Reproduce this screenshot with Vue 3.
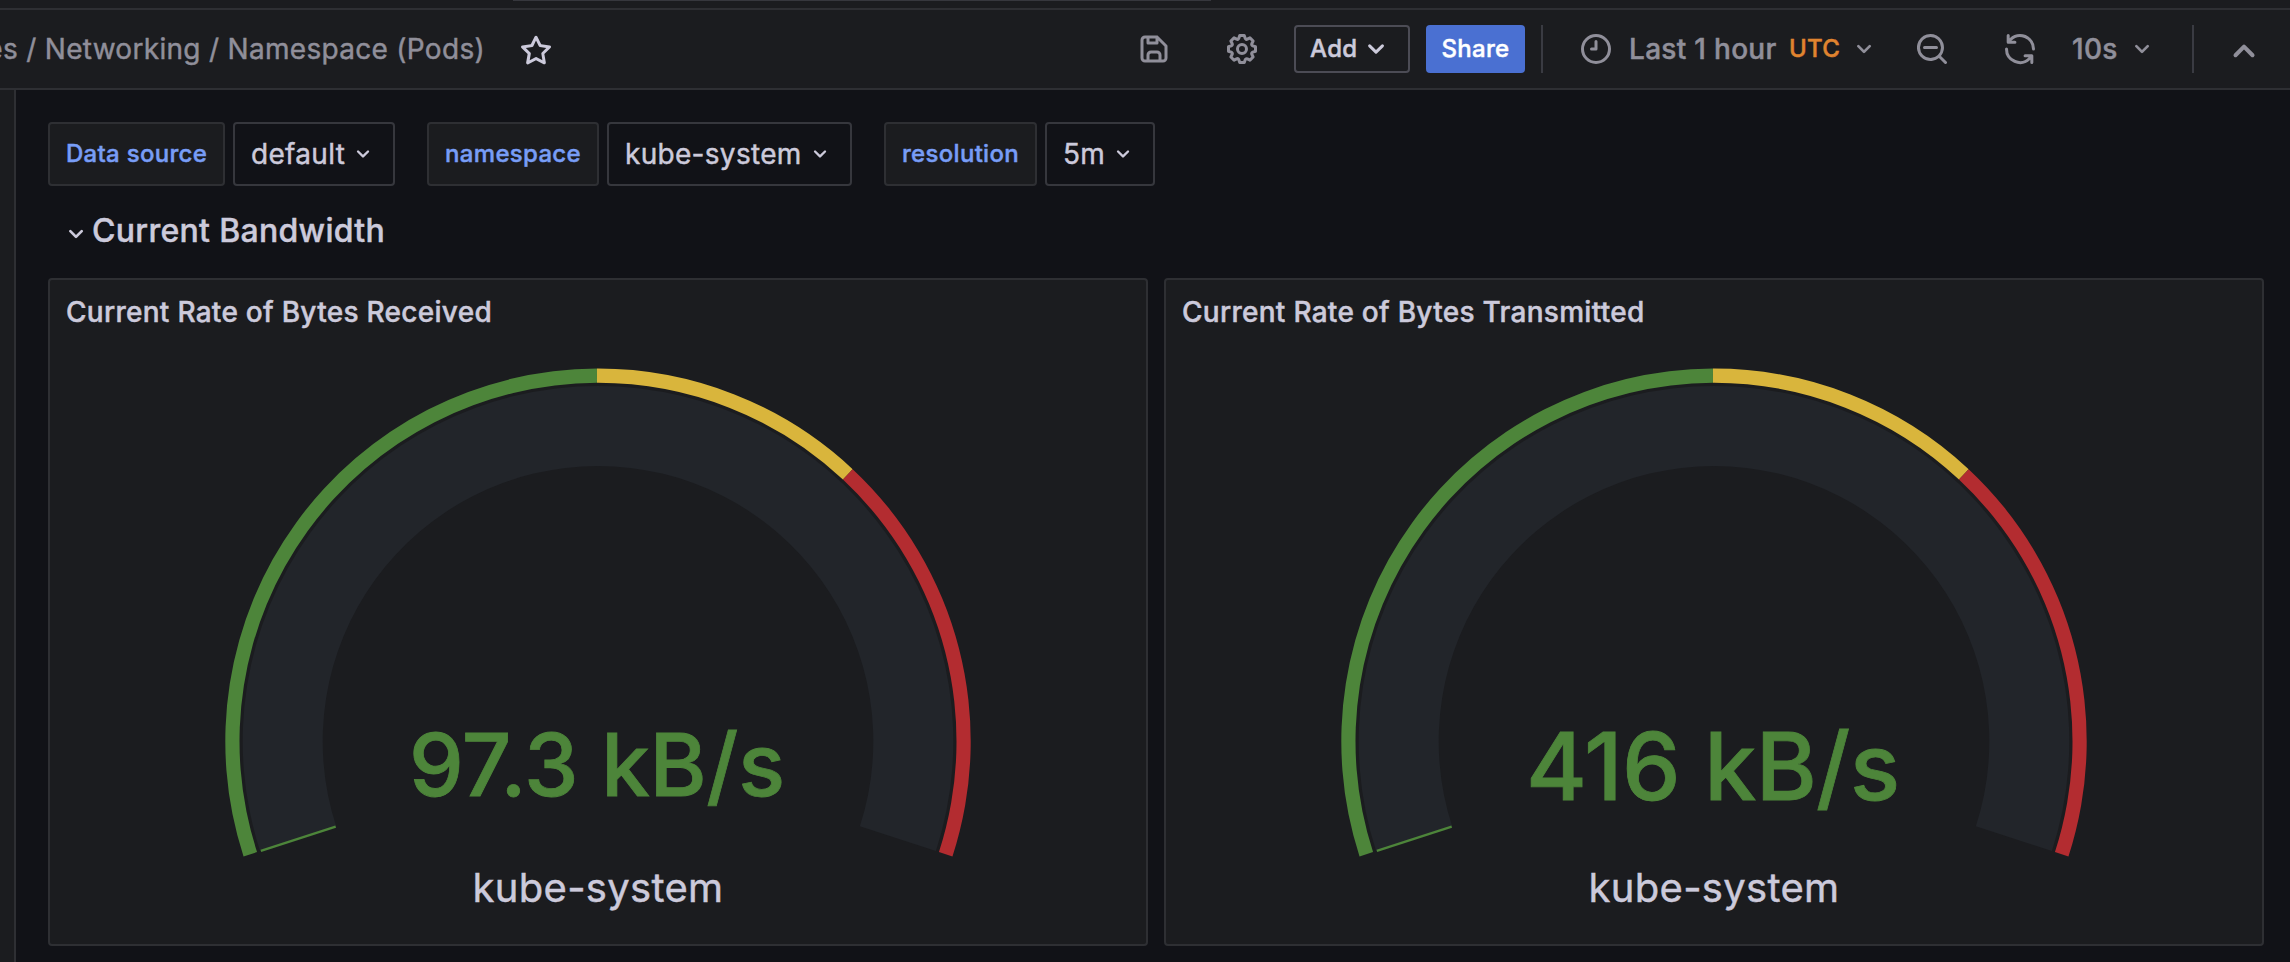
<script setup>
const icons = {
  star: 'M22,9.67A1,1,0,0,0,21.14,9l-5.69-.83L12.9,3a1,1,0,0,0-1.8,0L8.55,8.16,2.86,9a1,1,0,0,0-.81.68,1,1,0,0,0,.25,1l4.13,4-1,5.68A1,1,0,0,0,6.9,21.44L12,18.77l5.1,2.67a.93.93,0,0,0,.46.12,1,1,0,0,0,.59-.19,1,1,0,0,0,.4-1l-1-5.68,4.13-4A1,1,0,0,0,22,9.67Zm-6.15,4a1,1,0,0,0-.29.88l.72,4.2-3.76-2a1.06,1.06,0,0,0-.94,0l-3.76,2,.72-4.2a1,1,0,0,0-.29-.88l-3-3,4.21-.61a1,1,0,0,0,.76-.55L12,5.7l1.88,3.82a1,1,0,0,0,.76.55l4.21.61Z',
  save: 'M20.71,9.29l-6-6a1,1,0,0,0-.32-.21A1.09,1.09,0,0,0,14,3H6A3,3,0,0,0,3,6V18a3,3,0,0,0,3,3H18a3,3,0,0,0,3-3V10A1,1,0,0,0,20.71,9.29ZM9,5h4V7H9Zm6,14H9V16a1,1,0,0,1,1-1h4a1,1,0,0,1,1,1Zm4-1a1,1,0,0,1-1,1H17V16a3,3,0,0,0-3-3H10a3,3,0,0,0-3,3v3H6a1,1,0,0,1-1-1V6A1,1,0,0,1,6,5H7V8A1,1,0,0,0,8,9h6a1,1,0,0,0,1-1V6.41l4,4Z',
  cog: 'M21.32,9.55l-1.89-.63.89-1.78A1,1,0,0,0,20.13,6L18,3.87a1,1,0,0,0-1.15-.19l-1.78.89-.63-1.89A1,1,0,0,0,13.5,2h-3a1,1,0,0,0-.95.68L8.92,4.57,7.14,3.68A1,1,0,0,0,6,3.87L3.87,6a1,1,0,0,0-.19,1.15l.89,1.78-1.89.63A1,1,0,0,0,2,10.5v3a1,1,0,0,0,.68.95l1.89.63-.89,1.78A1,1,0,0,0,3.87,18L6,20.13a1,1,0,0,0,1.15.19l1.78-.89.63,1.89a1,1,0,0,0,.95.68h3a1,1,0,0,0,.95-.68l.63-1.89,1.78.89A1,1,0,0,0,18,20.13L20.13,18a1,1,0,0,0,.19-1.15l-.89-1.78,1.89-.63A1,1,0,0,0,22,13.5v-3A1,1,0,0,0,21.32,9.55ZM20,12.78l-1.2.4A2,2,0,0,0,17.64,16l.57,1.14-1.1,1.1L16,17.64a2,2,0,0,0-2.79,1.16l-.4,1.2H11.22l-.4-1.2A2,2,0,0,0,8,17.64l-1.14.57-1.1-1.1L6.36,16A2,2,0,0,0,5.2,13.18L4,12.78V11.22l1.2-.4A2,2,0,0,0,6.36,8L5.79,6.89l1.1-1.1L8,6.36A2,2,0,0,0,10.82,5.2l.4-1.2h1.56l.4,1.2A2,2,0,0,0,16,6.36l1.14-.57,1.1,1.1L17.64,8a2,2,0,0,0,1.16,2.79l1.2.4ZM12,8a4,4,0,1,0,4,4A4,4,0,0,0,12,8Zm0,6a2,2,0,1,1,2-2A2,2,0,0,1,12,14Z',
  clock: 'M12,2A10,10,0,1,0,22,12,10,10,0,0,0,12,2Zm0,18a8,8,0,1,1,8-8A8,8,0,0,1,12,20ZM12,6a1,1,0,0,0-1,1v4H9a1,1,0,0,0,0,2h3a1,1,0,0,0,1-1V7A1,1,0,0,0,12,6Z',
  zoomOut: 'M21.71,20.29,18,16.61A9,9,0,1,0,16.61,18l3.68,3.68a1,1,0,0,0,1.42,0A1,1,0,0,0,21.71,20.29ZM11,18a7,7,0,1,1,7-7A7,7,0,0,1,11,18Zm4-8H7a1,1,0,0,0,0,2h8a1,1,0,0,0,0-2Z',
  sync: 'M19.91,15.51H15.38a1,1,0,0,0,0,2h2.4A8,8,0,0,1,4,12a1,1,0,0,0-2,0,10,10,0,0,0,16.88,7.23V21a1,1,0,0,0,2,0V16.5A1,1,0,0,0,19.91,15.51ZM12,2A10,10,0,0,0,5.12,4.77V3a1,1,0,0,0-2,0V7.5a1,1,0,0,0,1,1h4.5a1,1,0,0,0,0-2H6.22A8,8,0,0,1,20,12a1,1,0,0,0,2,0A10,10,0,0,0,12,2Z',
  down: 'M17,9.17a1,1,0,0,0-1.41,0L12,12.71,8.46,9.17a1,1,0,0,0-1.41,0,1,1,0,0,0,0,1.42l4.24,4.24a1,1,0,0,0,1.42,0L17,10.59A1,1,0,0,0,17,9.17Z',
  up: 'M17,13.41,12.71,9.17a1,1,0,0,0-1.42,0L7.05,13.41a1,1,0,0,0,0,1.42,1,1,0,0,0,1.41,0L12,11.29l3.54,3.54a1,1,0,0,0,.7.29,1,1,0,0,0,.71-.29A1,1,0,0,0,17,13.41Z',
}

const variables = [
  { key: 'ds', label: 'Data source', value: 'default' },
  { key: 'ns', label: 'namespace', value: 'kube-system' },
  { key: 'res', label: 'resolution', value: '5m' },
]

const panels = [
  { title: 'Current Rate of Bytes Received', value: '97.3 kB/s', size: 87, baseline: 795.5, width: 376 },
  { title: 'Current Rate of Bytes Transmitted', value: '416 kB/s', size: 93, baseline: 800, width: 374 },
]

// Gauge geometry, in degrees clockwise from twelve o'clock.
const cx = 548
const cy = 461.3
function point(r, deg) {
  const a = (deg * Math.PI) / 180
  return `${(cx + r * Math.sin(a)).toFixed(2)},${(cy - r * Math.cos(a)).toFixed(2)}`
}
function band(inner, outer, from, to) {
  const large = to - from > 180 ? 1 : 0
  return `M${point(outer, from)}A${outer},${outer},0,${large},1,${point(outer, to)}L${point(inner, to)}A${inner},${inner},0,${large},0,${point(inner, from)}Z`
}
const track = band(275.3, 355.3, -108, 108)
const needle = `M${point(275.8, -108)}L${point(354.5, -108)}`
const thresholds = [
  { name: 'ok', d: band(358.5, 372.7, -108, -0.16) },
  { name: 'warn', d: band(358.5, 372.7, -0.16, 43.1) },
  { name: 'crit', d: band(358.5, 372.7, 43.1, 108) },
]
</script>

<template>
  <div class="page">
    <div class="topbar"><div class="search-edge"></div></div>
    <header class="toolbar">
      <nav class="crumbs"><span>es / Networking / Namespace (Pods)</span></nav>
      <svg class="i36 star" viewBox="0 0 24 24"><path :d="icons.star" /></svg>
      <div class="actions">
        <svg class="i36 save" viewBox="0 0 24 24"><path :d="icons.save" /></svg>
        <svg class="i36 cog" viewBox="0 0 24 24"><path :d="icons.cog" /></svg>
        <button class="add">Add<svg class="i36" viewBox="0 0 24 24"><path :d="icons.down" /></svg></button>
        <button class="share">Share</button>
        <i class="rule first"></i>
        <svg class="i36 clock" viewBox="0 0 24 24"><path :d="icons.clock" /></svg>
        <span class="range">Last 1 hour</span>
        <span class="utc">UTC</span>
        <svg class="i32 range-arrow" viewBox="0 0 24 24"><path :d="icons.down" /></svg>
        <svg class="i36 zoom" viewBox="0 0 24 24"><path :d="icons.zoomOut" /></svg>
        <svg class="i36 sync" viewBox="0 0 24 24"><path :d="icons.sync" /></svg>
        <span class="interval">10s</span>
        <svg class="i32 interval-arrow" viewBox="0 0 24 24"><path :d="icons.down" /></svg>
        <i class="rule"></i>
        <svg class="i48 collapse" viewBox="0 0 24 24"><path :d="icons.up" /></svg>
      </div>
    </header>
    <div class="body">
      <aside class="sidebar"></aside>
      <main class="content">
        <div class="variables">
          <div v-for="v in variables" :key="v.key" class="variable" :class="v.key">
            <label class="var-label">{{ v.label }}</label>
            <div class="var-value">
              <span>{{ v.value }}</span>
              <svg class="i28" viewBox="0 0 24 24"><path :d="icons.down" /></svg>
            </div>
          </div>
        </div>
        <div class="row-title">
          <svg class="i32" viewBox="0 0 24 24"><path :d="icons.down" /></svg>
          <h2>Current Bandwidth</h2>
        </div>
        <div class="panels">
          <section v-for="p in panels" :key="p.title" class="panel">
            <h3>{{ p.title }}</h3>
            <svg class="gauge" viewBox="0 64 1096 600">
              <path class="track" :d="track" />
              <path class="needle" :d="needle" />
              <path v-for="t in thresholds" :key="t.name" :class="t.name" :d="t.d" />
              <text class="value" :x="cx - 1" :y="p.baseline - 280" :font-size="p.size" :textLength="p.width">{{ p.value }}</text>
              <text class="name" :x="cx" y="621.5">kube-system</text>
            </svg>
          </section>
        </div>
      </main>
    </div>
  </div>
</template>

<style>
html, body { background: #111217; }
</style>

<style scoped>
.page {
  width: 2290px;
  height: 962px;
  overflow: hidden;
  display: flex;
  flex-direction: column;
  background: #111217;
  color: #cccadb;
  font-family: Inter, "Liberation Sans", sans-serif;
  font-size: 28px;
  letter-spacing: 0.3px;
  -webkit-text-stroke: 0.45px currentColor;
}
.page * { box-sizing: border-box; }
svg { display: block; flex: none; fill: currentColor; }
.i28 { width: 28px; height: 28px; }
.i32 { width: 32px; height: 32px; }
.i36 { width: 36px; height: 36px; }
.i48 { width: 48px; height: 48px; }

.topbar { height: 10px; flex: none; background: #1b1c1f; border-bottom: 2px solid #2e2f33; }
.search-edge { width: 698px; height: 1px; margin-left: 513px; background: #36373d; }

.toolbar {
  height: 80px;
  flex: none;
  display: flex;
  align-items: center;
  background: #1b1c1f;
  border-bottom: 2px solid #2e2f33;
  color: #908f9a;
}
.crumbs { width: 485px; display: flex; justify-content: flex-end; white-space: nowrap; }
.star { margin-left: 33px; margin-top: 1px; color: #cccadb; }
.actions { margin-left: auto; margin-right: 22px; display: flex; align-items: center; height: 48px; white-space: nowrap; }
.save { margin-right: 52px; }
.cog { margin-right: 34px; }
button {
  height: 48px;
  border: 0;
  border-radius: 4px;
  font: 500 24px Inter, "Liberation Sans", sans-serif;
  letter-spacing: 0.3px;
}
.add {
  width: 116px;
  margin-right: 16px;
  padding: 0 0 1px 14px;
  display: flex;
  align-items: center;
  gap: 1px;
  border: 2px solid #4c4c55;
  background: transparent;
  color: #cccadb;
}
.add svg { margin-top: 1px; }
.share { width: 99px; margin-right: 16px; padding: 0 0 2px; background: #4a70d2; color: #fff; }
.rule { width: 2px; height: 48px; background: #3a3b42; }
.rule.first { margin-right: 35px; }
.clock { margin-right: 15px; }
.range { width: 160px; font-weight: 500; }
.utc { width: 59px; padding-bottom: 2px; font-size: 24px; font-weight: 500; color: #e0842f; }
.range-arrow { margin-right: 34px; }
.zoom { margin-right: 52px; }
.sync { margin-right: 34px; }
.interval { width: 54px; font-weight: 500; }
.interval-arrow { margin-right: 34px; }
.collapse { margin-left: 26px; margin-top: 4px; }

.body { flex: 1; min-height: 0; display: flex; }
.sidebar { width: 16px; flex: none; background: #1b1c1f; border-right: 2px solid #2e2f33; }
.content { flex: 1; padding: 32px 26px 0 32px; }

.variables { display: flex; gap: 32px; height: 64px; }
.variable { display: flex; gap: 8px; }
.var-label, .var-value { display: flex; align-items: center; height: 64px; border-radius: 4px; }
.var-label {
  justify-content: center;
  padding-bottom: 1px;
  background: #1b1c1f;
  border: 2px solid #2e2f33;
  font-size: 24px;
  font-weight: 500;
  color: #789df6;
}
.var-value { padding-left: 16px; gap: 4px; border: 2px solid #36373d; }
.ds .var-label { width: 177px; }
.ds .var-value { width: 162px; }
.ns .var-label { width: 172px; }
.ns .var-value { width: 245px; }
.res .var-label { width: 153px; }
.res .var-value { width: 110px; }

.row-title { display: flex; align-items: center; height: 92px; padding: 0 0 3px 12px; }
.row-title svg { margin-top: 6px; }
.row-title h2 { margin: 0; font-size: 32px; font-weight: 500; letter-spacing: 0.3px; }

.panels { display: grid; grid-template-columns: 1100px 1100px; gap: 16px; }
.panel { height: 668px; border: 2px solid #2e2f33; border-radius: 4px; background: #1b1c1f; }
.panel h3 { margin: 0; height: 64px; padding-left: 16px; line-height: 64px; font-size: 28px; font-weight: 500; letter-spacing: 0.28px; }
.gauge { width: 1096px; height: 600px; }
.track { fill: #22252a; }
.needle { stroke: #4d853a; stroke-width: 2.4; }
.ok { fill: #4d853a; }
.warn { fill: #d9b53c; }
.crit { fill: #b32c30; }
.value { fill: #4d853a; stroke: #4d853a; stroke-width: 0.8px; font-weight: 500; text-anchor: middle; letter-spacing: 0; }
.name { fill: #cccadb; stroke: #cccadb; stroke-width: 0.45px; font-size: 40px; text-anchor: middle; }
</style>
